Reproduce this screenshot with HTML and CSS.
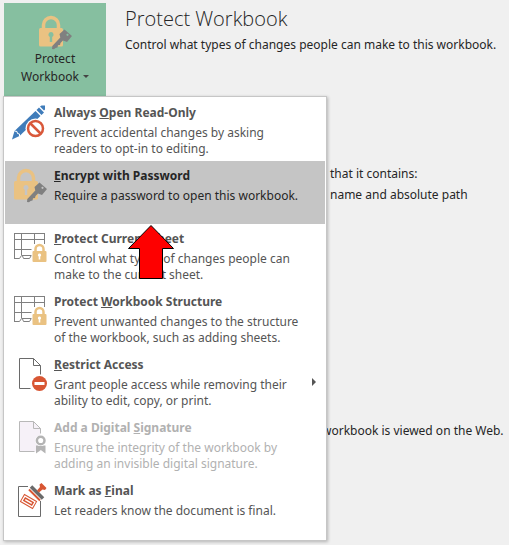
FILE: index.html
```html
<!DOCTYPE html>
<html lang="en">
<head>
    <meta charset="UTF-8">
    <meta name="viewport" content="width=device-width, initial-scale=1.0">
    <title>Protect Workbook</title>
    <link rel="stylesheet" href="styles.css">
</head>
<body>
    <!-- shared icon shapes -->
    <svg class="defs" aria-hidden="true">
        <symbol id="lock-key" viewBox="0 0 36 36">
            <path d="M6.500 15v-4a7.500 7.500 0 0 1 15 0v4" fill="none" stroke="#eac282" stroke-width="3.500"/>
            <rect x="2" y="14" width="24" height="18.500" rx="1.500" fill="#eac282"/>
            <path class="keyhole" d="M14 18a2.600 2.600 0 0 1 1.200 4.900v5.100h-2.400v-5.100A2.600 2.600 0 0 1 14 18z"/>
            <path d="M27.500 15.500l7.500 6.500-5 6-4-1.500-2.500 2.500-.5 2-2 .3-.5 2.200-2 .5-1.500 1.300-2-.3.300-3 8-8.500-.8-3.500z" fill="#808080"/>
            <circle cx="30.500" cy="20.800" r="1.100" class="keyhole"/>
        </symbol>
        <symbol id="sheet-lock" viewBox="0 0 36 36">
            <path d="M2.500 3.500h30M2.500 9.500h30M2.500 19.500h17M2.500 3v26M9.500 3v22M22.500 3v11M32.500 3v11M2.500 28.500h5l2-3h10M10.500 26l1 2.500h6l1.500-2.500" fill="none" stroke="#808080"/>
            <path d="M23.500 22v-3a4 4 0 0 1 8 0v3" fill="none" stroke="#eac282" stroke-width="2.500"/>
            <rect x="20.500" y="21" width="14" height="11" rx="1" fill="#eac282"/>
            <path d="M27.500 23.500a1.600 1.600 0 0 1 .8 3v3h-1.600v-3a1.600 1.600 0 0 1 .8-3z" fill="#fff"/>
        </symbol>
    </svg>

    <header class="top">
        <div class="dropdown">
            <button type="button" class="protect-btn" aria-haspopup="menu" aria-expanded="true">
                <svg class="icon"><use href="#lock-key"/></svg>
                <span>Protect</span>
                <span>Workbook<i class="caret"></i></span>
            </button>

            <div class="menu" role="menu">
                <button type="button" class="item" role="menuitem">
                    <svg class="icon" viewBox="0 0 36 36">
                        <path d="M0 35.500l2.500-8.500L23.500 7l5 5L7.500 32z" fill="#3f7cba"/>
                        <path d="M24.500 6l2.500-2.500 5 5-2.500 2.500z" fill="#3f7cba"/>
                        <path d="M28 2.500l1.500-1h3.500v4l-1 1z" fill="#3f7cba"/>
                        <path d="M2.500 27l2.500.5.5 2 2 .5v2" fill="none" stroke="#fff"/>
                        <circle cx="23.500" cy="24.500" r="10" fill="#fff"/>
                        <circle cx="23.500" cy="24.500" r="7.500" fill="#fff" stroke="#d9583a" stroke-width="2.500"/>
                        <path d="M18.500 19.500l10 10" stroke="#d9583a" stroke-width="2.500"/>
                    </svg>
                    <span class="text">
                        <span class="title">Always <u>O</u>pen Read-Only</span>
                        <span class="desc">Prevent accidental changes by asking readers to opt-in to editing.</span>
                    </span>
                </button>
                <button type="button" class="item selected" role="menuitem">
                    <svg class="icon"><use href="#lock-key"/></svg>
                    <span class="text">
                        <span class="title"><u>E</u>ncrypt with Password</span>
                        <span class="desc">Require a password to open this workbook.</span>
                    </span>
                </button>
                <button type="button" class="item" role="menuitem">
                    <svg class="icon"><use href="#sheet-lock"/></svg>
                    <span class="text">
                        <span class="title"><u>P</u>rotect Current Sheet</span>
                        <span class="desc">Control what types of changes people can make to the current sheet.</span>
                    </span>
                </button>
                <button type="button" class="item" role="menuitem">
                    <svg class="icon"><use href="#sheet-lock"/></svg>
                    <span class="text">
                        <span class="title">Protect <u>W</u>orkbook Structure</span>
                        <span class="desc">Prevent unwanted changes to the structure of the workbook, such as adding sheets.</span>
                    </span>
                </button>
                <button type="button" class="item" role="menuitem">
                    <svg class="icon" viewBox="0 0 36 36">
                        <path d="M18.500 32.500h-11v-30h14l7 7v9M21.500 2.500v7h7" fill="none" stroke="#6a6a6a"/>
                        <circle cx="27.500" cy="27.500" r="7.500" fill="#d85633"/>
                        <rect x="22.500" y="26" width="10" height="3" fill="#fff"/>
                    </svg>
                    <span class="text">
                        <span class="title"><u>R</u>estrict Access</span>
                        <span class="desc">Grant people access while removing their ability to edit, copy, or print.</span>
                    </span>
                    <i class="submenu"></i>
                </button>
                <button type="button" class="item" role="menuitem" disabled>
                    <svg class="icon" viewBox="0 0 36 36">
                        <path d="M7.500 2.500h14l7 7v23h-21z" fill="#f6f1f8"/>
                        <path d="M22.500 32.500h-15v-30h14l7 7v5M21.500 2.500v7h7" fill="none" stroke="#b8b8b8"/>
                        <path d="M24 26.500h9.500v8l-4.700-3.500-4.800 3.500z" fill="#b4b4b4"/>
                        <circle cx="28.700" cy="21.500" r="5.500" fill="#fff"/>
                        <circle cx="28.700" cy="21.500" r="3.800" fill="#fff" stroke="#b4b4b4" stroke-width="2.500"/>
                    </svg>
                    <span class="text">
                        <span class="title">Add a Digital <u>S</u>ignature</span>
                        <span class="desc">Ensure the integrity of the workbook by adding an invisible digital signature.</span>
                    </span>
                </button>
                <button type="button" class="item" role="menuitem">
                    <svg class="icon" viewBox="0 0 36 36">
                        <path d="M16 4.500H6.500v30h22V19" fill="none" stroke="#6a6a6a"/>
                        <path d="M19 4.500l12 12" stroke="#6a6a6a" stroke-width="3.500"/>
                        <path d="M17 7.500l11 11" stroke="#d85633" stroke-width="2"/>
                        <path d="M25 8.500l3-3.500-.5-2.500 2-1.500 5 5-1.500 2-2.500-.5-3.500 3z" fill="#d85633"/>
                        <g transform="rotate(30 16.500 19.500)" fill="none" stroke="#d85633">
                            <rect x="9.500" y="15.500" width="14" height="8"/>
                            <rect x="12" y="18" width="9" height="3" stroke-width="1.500"/>
                        </g>
                    </svg>
                    <span class="text">
                        <span class="title">Mark as <u>F</u>inal</span>
                        <span class="desc">Let readers know the document is final.</span>
                    </span>
                </button>

                <svg class="pointer" viewBox="0 0 48 56" aria-hidden="true">
                    <path d="M24 1.500L46.500 24.500h-11v30h-23v-30h-11z" fill="#fe0000" stroke="#000"/>
                </svg>
            </div>
        </div>
        <div class="intro">
            <h1>Protect Workbook</h1>
            <p>Control what types of changes people can make to this workbook.</p>
        </div>
    </header>

    <main class="details">
        <section class="inspect">
            <p>that it contains:</p>
            <p>name and absolute path</p>
        </section>
        <section class="browser">
            <p>workbook is viewed on the Web.</p>
        </section>
    </main>
</body>
</html>
```

FILE: styles.css
```css
* {
    box-sizing: border-box;
}
body {
    min-height: 100vh;
    margin: 0;
    padding: 3px 4px;
    background: #f0f0f0;
    color: #262626;
    font-family: "Noto Sans", "Open Sans", sans-serif;
    font-size: 12px;
    line-height: 16px;
}
h1, p {
    margin: 0;
}
button {
    border: none;
    font: inherit;
    color: inherit;
    cursor: pointer;
}
.defs {
    position: absolute;
    width: 0;
    height: 0;
}
.icon {
    flex: none;
    width: 36px;
    height: 36px;
}
.top {
    display: flex;
    gap: 19px;
}
.dropdown {
    position: relative;
}
.protect-btn {
    display: flex;
    flex-direction: column;
    align-items: center;
    width: 102px;
    height: 93px;
    padding: 11px 0 0;
    background: #86bfa0;
    line-height: 18px;
}
.protect-btn .icon {
    fill: #86bfa0;
}
.caret {
    display: inline-block;
    margin-left: 4px;
    border: 3px solid transparent;
    border-top-color: #444;
    border-bottom: none;
    vertical-align: 3px;
}
.intro h1 {
    margin: 3px 0 5px;
    font-family: "Open Sans", "Noto Sans", sans-serif;
    font-size: 20px;
    font-weight: 300;
    line-height: 26px;
    white-space: nowrap;
}
.intro p {
    white-space: nowrap;
}

/* drop-down menu */
.menu {
    position: absolute;
    top: 93px;
    left: -1px;
    z-index: 1;
    width: 324px;
    padding: 1px;
    background: #fff;
    border: 1px solid #c6c6c6;
    box-shadow: 1px 1px 3px rgba(0, 0, 0, 0.25);
}
.item {
    display: flex;
    width: 100%;
    height: 63px;
    padding: 6px 7px;
    background: #fff;
    color: #555;
    text-align: left;
}
.item .icon {
    fill: #fff;
}
.item.selected {
    background: #c5c5c5;
    color: #262626;
}
.item.selected .icon {
    fill: #c5c5c5;
}
.item:disabled {
    color: #b1b1b1;
    cursor: default;
}
.text {
    width: 254px;
    margin: 1px 0 0 6px;
}
.title, .desc {
    display: block;
}
.title {
    margin-bottom: 4px;
    font-weight: 700;
}
.submenu {
    align-self: center;
    margin-left: 4px;
    border: 4px solid transparent;
    border-left-color: #555;
    border-right: none;
}
.pointer {
    position: absolute;
    top: 127px;
    left: 123px;
    width: 48px;
    height: 56px;
}

/* page behind the menu */
.details p {
    white-space: nowrap;
}
.inspect {
    margin: 70px 0 0 326px;
}
.inspect p {
    margin-bottom: 5px;
}
.browser {
    margin: 220px 0 0 318px;
}
```
